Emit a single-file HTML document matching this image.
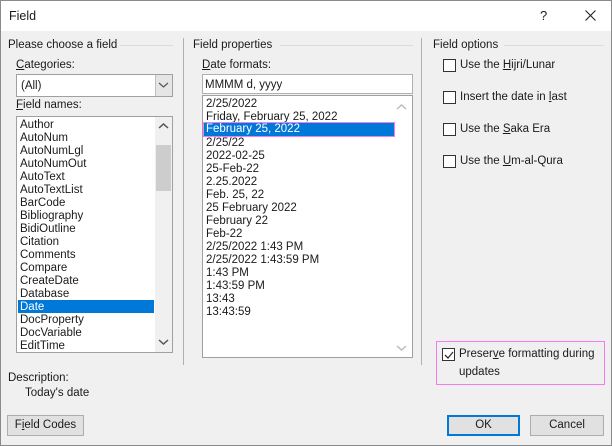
<!DOCTYPE html>
<html><head><style>
*{margin:0;padding:0;box-sizing:border-box}
body{width:612px;height:446px;background:#f0f0f0;font-family:"Liberation Sans",sans-serif;font-size:11.5px;color:#1a1a1a;position:relative;overflow:hidden}
.a{position:absolute;white-space:nowrap}
.frame{position:absolute;left:0;top:0;width:612px;height:446px;border:1px solid #8a8a8a}
.title{position:absolute;left:1px;top:1px;width:610px;height:30px;background:#fff}
.box{position:absolute;background:#fff;border:1px solid #a0a0a0}
.it{position:absolute;left:3px;height:13px;line-height:15px}
.sel{background:#0078d7;color:#fff}
.cb{position:absolute;width:13px;height:13px;border:1px solid #333;background:#fff}
.btn{position:absolute;height:21px;background:#e1e1e1;border:1px solid #adadad;text-align:center;line-height:19px}
.hl{position:absolute;height:1px;background:#dcdcdc}
.vl{position:absolute;width:1px;background:#a0a0a0}
u{text-decoration:underline}
</style></head><body>
<div class="title"></div>
<div class="a" style="left:9px;top:9px;font-size:12.5px">Field</div>
<div class="a" style="left:540px;top:8px;font-size:13px">?</div>
<svg class="a" style="left:585px;top:10px" width="11" height="11"><path d="M0.5 0.5l10 10M10.5 0.5l-10 10" stroke="#222" stroke-width="1.1"/></svg>

<div class="a" style="left:8px;top:39px">Please choose a field</div>
<div class="hl" style="left:120px;top:45px;width:53px"></div>
<div class="vl" style="left:183px;top:38px;height:327px;background:#b0b0b0"></div>
<div class="a" style="left:16px;top:59px"><u>C</u>ategories:</div>
<div class="box" style="left:16px;top:74px;width:157px;height:23px"></div>
<div class="a" style="left:21px;top:80px">(All)</div>
<div class="a" style="left:155px;top:75px;width:17px;height:21px;background:#e5e5e5;border-left:1px solid #c0c0c0"></div>
<svg class="a" style="left:158px;top:81px" width="11" height="8"><path d="M1 2l4.5 4 4.5-4" fill="none" stroke="#555" stroke-width="1.2"/></svg>
<div class="a" style="left:16px;top:99px"><u>F</u>ield names:</div>
<div class="box" style="left:16px;top:116px;width:157px;height:237px;overflow:hidden">
<div style="position:absolute;left:138px;top:0;width:17px;height:235px;background:#f0f0f0"></div>
<div style="position:absolute;left:139px;top:28px;width:15px;height:46px;background:#cdcdcd"></div>
<svg style="position:absolute;left:141px;top:5px" width="11" height="8"><path d="M1 6l4.5-4 4.5 4" fill="none" stroke="#555" stroke-width="1.5"/></svg>
<svg style="position:absolute;left:141px;top:221px" width="11" height="8"><path d="M1 2l4.5 4 4.5-4" fill="none" stroke="#555" stroke-width="1.5"/></svg>
<div class="it" style="top:1px">Author</div>
<div class="it" style="top:14px">AutoNum</div>
<div class="it" style="top:27px">AutoNumLgl</div>
<div class="it" style="top:40px">AutoNumOut</div>
<div class="it" style="top:53px">AutoText</div>
<div class="it" style="top:66px">AutoTextList</div>
<div class="it" style="top:79px">BarCode</div>
<div class="it" style="top:92px">Bibliography</div>
<div class="it" style="top:105px">BidiOutline</div>
<div class="it" style="top:118px">Citation</div>
<div class="it" style="top:131px">Comments</div>
<div class="it" style="top:144px">Compare</div>
<div class="it" style="top:157px">CreateDate</div>
<div class="it" style="top:170px">Database</div>
<div class="it sel" style="top:183px;left:1px;width:136px;padding-left:2px">Date</div>
<div class="it" style="top:196px">DocProperty</div>
<div class="it" style="top:209px">DocVariable</div>
<div class="it" style="top:222px">EditTime</div>
</div>
<div class="a" style="left:8px;top:372px">Description:</div>
<div class="a" style="left:25px;top:387px">Today's date</div>
<div class="btn" style="left:7px;top:415px;width:77px">F<u>i</u>eld Codes</div>

<div class="a" style="left:193px;top:39px">Field properties</div>
<div class="hl" style="left:280px;top:45px;width:133px"></div>
<div class="a" style="left:202px;top:59px"><u>D</u>ate formats:</div>
<div class="box" style="left:202px;top:74px;width:211px;height:20px;border-color:#b0b0b0"></div>
<div class="a" style="left:205px;top:79px">MMMM d, yyyy</div>
<div class="box" style="left:202px;top:95px;width:211px;height:263px;overflow:hidden">
<svg style="position:absolute;left:193px;top:7px" width="11" height="8"><path d="M1 6l4.5-4 4.5 4" fill="none" stroke="#bbb" stroke-width="1.5"/></svg>
<svg style="position:absolute;left:193px;top:248px" width="11" height="8"><path d="M1 2l4.5 4 4.5-4" fill="none" stroke="#bbb" stroke-width="1.5"/></svg>
<div class="it" style="top:1px">2/25/2022</div>
<div class="it" style="top:14px">Friday, February 25, 2022</div>
<div class="it sel" style="top:26px;left:0;width:192px;height:15px;padding-left:2px;border:1.5px solid #f47cf0;line-height:13px">February 25, 2022</div>
<div class="it" style="top:40px">2/25/22</div>
<div class="it" style="top:53px">2022-02-25</div>
<div class="it" style="top:66px">25-Feb-22</div>
<div class="it" style="top:79px">2.25.2022</div>
<div class="it" style="top:92px">Feb. 25, 22</div>
<div class="it" style="top:105px">25 February 2022</div>
<div class="it" style="top:118px">February 22</div>
<div class="it" style="top:131px">Feb-22</div>
<div class="it" style="top:144px">2/25/2022 1:43 PM</div>
<div class="it" style="top:157px">2/25/2022 1:43:59 PM</div>
<div class="it" style="top:170px">1:43 PM</div>
<div class="it" style="top:183px">1:43:59 PM</div>
<div class="it" style="top:196px">13:43</div>
<div class="it" style="top:209px">13:43:59</div>
</div>
<div class="vl" style="left:421px;top:38px;height:327px;background:#b0b0b0"></div>

<div class="a" style="left:433px;top:39px">Field options</div>
<div class="hl" style="left:504px;top:45px;width:100px"></div>
<div class="cb" style="left:443px;top:59px"></div><div class="a" style="left:460px;top:59px">Use the <u>H</u>ijri/Lunar</div>
<div class="cb" style="left:443px;top:91px"></div><div class="a" style="left:460px;top:91px">Insert the date in <u>l</u>ast</div>
<div class="cb" style="left:443px;top:123px"></div><div class="a" style="left:460px;top:123px">Use the <u>S</u>aka Era</div>
<div class="cb" style="left:443px;top:155px"></div><div class="a" style="left:460px;top:155px">Use the <u>U</u>m-al-Qura</div>

<div class="a" style="left:436px;top:341px;width:169px;height:44px;border:1.5px solid #f47cf0"></div>
<div class="cb" style="left:442px;top:348px"></div>
<svg class="a" style="left:443px;top:349px" width="12" height="12"><path d="M2 6l3 3 5-6" fill="none" stroke="#333" stroke-width="1.3"/></svg>
<div class="a" style="left:459px;top:348px">Preser<u>v</u>e formatting during</div>
<div class="a" style="left:459px;top:366px">updates</div>

<div class="btn" style="left:447px;top:415px;width:73px;border:2px solid #0078d7;line-height:17px">OK</div>
<div class="btn" style="left:530px;top:415px;width:74px">Cancel</div>
<div class="frame"></div>
</body></html>
